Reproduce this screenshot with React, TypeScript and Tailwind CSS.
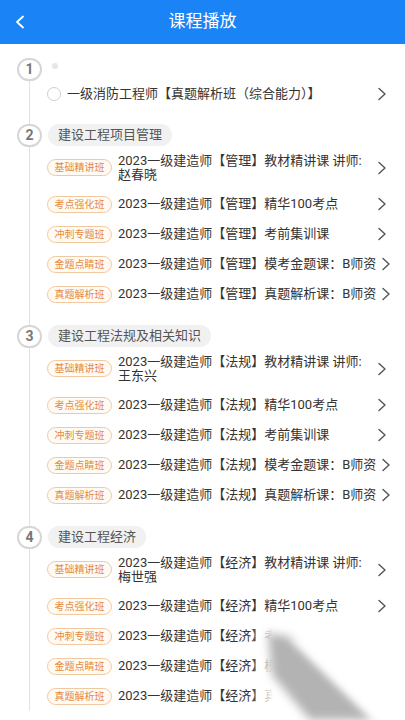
import React from "react";

type Row = { tag: string; text: string; wrap?: boolean };
type Section = { no: number; title: string; rows: Row[] };

const TAGS = ["基础精讲班", "考点强化班", "冲刺专题班", "金题点睛班", "真题解析班"];

function makeRows(subject: string, teacher: string): Row[] {
  return [
    { tag: TAGS[0], text: `2023一级建造师【${subject}】教材精讲课 讲师:${teacher}`, wrap: true },
    { tag: TAGS[1], text: `2023一级建造师【${subject}】精华100考点` },
    { tag: TAGS[2], text: `2023一级建造师【${subject}】考前集训课` },
    { tag: TAGS[3], text: `2023一级建造师【${subject}】模考金题课：B师资` },
    { tag: TAGS[4], text: `2023一级建造师【${subject}】真题解析课：B师资` },
  ];
}

const SECTIONS: Section[] = [
  { no: 2, title: "建设工程项目管理", rows: makeRows("管理", "赵春晓") },
  { no: 3, title: "建设工程法规及相关知识", rows: makeRows("法规", "王东兴") },
  { no: 4, title: "建设工程经济", rows: makeRows("经济", "梅世强") },
];

function Chevron() {
  return (
    <svg width="12" height="14" viewBox="0 0 12 14" fill="none" stroke="#555" strokeWidth="1.4" aria-hidden="true">
      <path d="M3 1.5l6 5.5-6 5.5" strokeLinecap="round" strokeLinejoin="round" />
    </svg>
  );
}

function StepCircle({ n }: { n: number }) {
  return (
    <div className="-ml-[13px] flex h-[23px] w-[25px] shrink-0 items-center justify-center rounded-full border-[2.5px] border-[#d6d6d6] bg-white text-[14px] font-bold text-[#777]">
      {n}
    </div>
  );
}

function CourseRow({ row }: { row: Row }) {
  return (
    <div className={`flex items-center pr-[17px] ${row.wrap ? "h-[43px]" : "h-[30px]"}`}>
      <span className="flex h-[17px] w-[65px] shrink-0 items-center justify-center rounded-full border border-[#f1c9a1] bg-[#fffaf4] text-[10px] text-[#e58a3e]">
        {row.tag}
      </span>
      <div
        className={`ml-[6px] flex-1 text-[13px] text-[#333] ${
          row.wrap ? "leading-[14px]" : "whitespace-nowrap leading-[16px]"
        }`}
      >
        {row.text}
      </div>
      <div className="ml-[4px] shrink-0">
        <Chevron />
      </div>
    </div>
  );
}

export default function App() {
  return (
    <div
      className="relative h-[720px] w-[405px] overflow-hidden bg-white"
      style={{ fontFamily: 'Roboto, "Noto Sans CJK SC", sans-serif' }}
    >
      {/* Top bar */}
      <header className="relative flex h-[44px] items-center justify-center bg-[#1a83f5]">
        <svg
          className="absolute left-[14px] top-[15px]"
          width="12"
          height="14"
          viewBox="0 0 12 14"
          fill="none"
          stroke="white"
          strokeWidth="1.8"
          aria-hidden="true"
        >
          <path d="M9 1.5L3 7l6 5.5" strokeLinecap="round" strokeLinejoin="round" />
        </svg>
        <h1 className="text-[17px] text-white">课程播放</h1>
      </header>

      {/* Timeline */}
      <div className="ml-[29px] mt-[14px] border-l border-[#e2e2e2]">
        {/* section 1 */}
        <div className="flex h-[22px] items-center">
          <StepCircle n={1} />
          <span className="ml-[10px] mb-[6px] h-[6px] w-[6px] rounded-full bg-[#e6e6e6]" />
        </div>
        <div className="flex h-[28px] items-center pl-[17px] pr-[17px]">
          <span className="h-[14px] w-[14px] shrink-0 rounded-full border border-[#cfcfcf]" />
          <div className="ml-[6px] flex-1 whitespace-nowrap text-[13px] text-[#333]">
            一级消防工程师【真题解析班（综合能力）】
          </div>
          <Chevron />
        </div>

        {SECTIONS.map((s) => (
          <section key={s.no} className="mt-[16px]">
            <div className="flex h-[22px] items-center">
              <StepCircle n={s.no} />
              <span className="ml-[6px] flex h-[22px] items-center rounded-full bg-[#f1f1f1] px-[10px] text-[13px] text-[#555]">
                {s.title}
              </span>
            </div>
            <div className="pl-[17px]">
              {s.rows.map((r) => (
                <CourseRow key={r.tag} row={r} />
              ))}
            </div>
          </section>
        ))}
      </div>

      {/* smudge over the bottom right corner */}
      <svg
        className="absolute left-[250px] top-[615px]"
        width="155"
        height="105"
        viewBox="0 0 155 105"
        aria-hidden="true"
      >
        <defs>
          <linearGradient id="fade" x1="0" x2="1" y1="0" y2="0">
            <stop offset="0" stopColor="#fff" stopOpacity="0" />
            <stop offset="0.15" stopColor="#fff" stopOpacity="1" />
          </linearGradient>
          <filter id="blur" x="-30%" y="-30%" width="160%" height="160%">
            <feGaussianBlur stdDeviation="5" />
          </filter>
        </defs>
        <rect x="0" y="5" width="155" height="100" fill="url(#fade)" />
        <polygon points="18,18 40,22 125,105 60,105 22,60" fill="#9a9a9a" opacity="0.75" filter="url(#blur)" />
        <polygon points="40,22 150,20 155,105 125,105" fill="#fff" filter="url(#blur)" />
      </svg>
    </div>
  );
}
